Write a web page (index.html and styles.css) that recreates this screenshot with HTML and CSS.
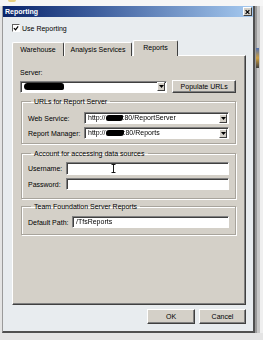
FILE: index.html
```html
<!DOCTYPE html>
<html>
<head>
<meta charset="utf-8">
<link rel="stylesheet" href="styles.css">
</head>
<body>
<div class="screen">
  <div class="backdrop-top"><span class="blob-yellow"></span></div>
  <div class="stage">
    <div class="window">
      <div class="titlebar">
        <span class="title">Reporting</span>
        <span class="close">
          <svg width="9" height="8" viewBox="0 0 9 8"><path d="M2 1.5 L7 6.5 M7 1.5 L2 6.5" stroke="#000" stroke-width="1.6"/></svg>
        </span>
      </div>
      <div class="body">
        <div class="check-row">
          <span class="checkbox"><svg width="7" height="7" viewBox="0 0 7 7"><path d="M1 3 L3 5 L6 1" fill="none" stroke="#000" stroke-width="1.4"/></svg></span>
          <span>Use Reporting</span>
        </div>
        <div class="tabs">
          <div class="tab tab-wh">Warehouse</div>
          <div class="tab tab-as">Analysis Services</div>
          <div class="tab active">Reports</div>
        </div>
        <div class="panel">
          <div class="lbl">Server:</div>
          <div class="server-row">
            <div class="combo server-combo">
              <span class="ctext"><span class="redact r-server"></span></span>
              <span class="dd"><svg width="5" height="3" viewBox="0 0 5 3"><path d="M0 0 H5 L2.5 3 Z" fill="#000"/></svg></span>
            </div>
            <div class="btn populate">Populate URLs</div>
          </div>
          <fieldset class="group g1">
            <legend>URLs for Report Server</legend>
            <div class="frow">
              <span class="flabel w56">Web Service:</span>
              <div class="combo grow">
                <span class="ctext"><span class="t">http://</span><span class="redact r-url"></span><span class="t">:80/ReportServer</span></span>
                <span class="dd"><svg width="5" height="3" viewBox="0 0 5 3"><path d="M0 0 H5 L2.5 3 Z" fill="#000"/></svg></span>
              </div>
            </div>
            <div class="frow">
              <span class="flabel w56">Report Manager:</span>
              <div class="combo grow">
                <span class="ctext"><span class="t">http://</span><span class="redact r-url2"></span><span class="t">:80/Reports</span></span>
                <span class="dd"><svg width="5" height="3" viewBox="0 0 5 3"><path d="M0 0 H5 L2.5 3 Z" fill="#000"/></svg></span>
              </div>
            </div>
          </fieldset>
          <fieldset class="group g2">
            <legend>Account for accessing data sources</legend>
            <div class="frow">
              <span class="flabel w38">Username:</span>
              <div class="textbox grow tall"><span class="ibeam"><svg width="5" height="9" viewBox="0 0 5 9"><path d="M0.5 0.5 H4.5 M2.5 0.5 V8.5 M0.5 8.5 H4.5" stroke="#000" stroke-width="0.9" fill="none"/></svg></span></div>
            </div>
            <div class="frow">
              <span class="flabel w38">Password:</span>
              <div class="textbox grow"></div>
            </div>
          </fieldset>
          <fieldset class="group g3">
            <legend>Team Foundation Server Reports</legend>
            <div class="frow">
              <span class="flabel w44">Default Path:</span>
              <div class="textbox grow"><span class="ctext"><span class="t">/TfsReports</span></span></div>
            </div>
          </fieldset>
        </div>
        <div class="buttons">
          <div class="btn ok">OK</div>
          <div class="btn cancel">Cancel</div>
        </div>
      </div>
    </div>
    <div class="side">
      <span class="side-bits"></span>
    </div>
  </div>
</div>
</body>
</html>
```

FILE: styles.css
```css
* { box-sizing: border-box; }
html, body { margin: 0; padding: 0; }
body {
  width: 263px;
  height: 340px;
  overflow: hidden;
  background: #e4e4e4;
  font-family: "Liberation Sans", Arial, sans-serif;
  font-size: 7px;
  color: #000;
}
.screen { width: 263px; height: 340px; display: flex; flex-direction: column; }
.backdrop-top {
  height: 6px;
  background: #f6f6f6;
  padding-left: 8px;
}
.blob-yellow {
  display: block;
  width: 8px;
  height: 2px;
  background: #e8d080;
  border-radius: 0 0 4px 4px;
}
.stage { display: flex; align-items: flex-start; }
.window {
  margin-left: 2px;
  width: 253px;
  height: 327px;
  background: #e8ecef;
  border-left: 1px solid #9a9a9a;
  border-right: 2px solid #505050;
  border-bottom: 2px solid #505050;
  display: flex;
  flex-direction: column;
}
.titlebar {
  height: 11px;
  background: linear-gradient(to right, #0a246a 0%, #3a5a9a 35%, #a6caf0 100%);
  display: flex;
  align-items: center;
  justify-content: space-between;
  padding: 0 1px 0 2px;
}
.title { color: #fff; font-weight: bold; font-size: 7px; line-height: 11px; }
.close {
  width: 9px;
  height: 9px;
  background: #d4d0c8;
  border: 1px solid;
  border-color: #fff #404040 #404040 #fff;
  display: flex;
  align-items: center;
  justify-content: center;
}
.close svg { width: 7px; height: 6px; }
.body {
  flex: 1;
  padding: 6px 7px 0 9px;
  display: flex;
  flex-direction: column;
}
.check-row {
  height: 10px;
  display: flex;
  align-items: center;
  gap: 2px;
}
.checkbox {
  width: 8px;
  height: 8px;
  background: #fff;
  border: 1px solid;
  border-color: #606060 #fff #fff #606060;
  display: flex;
  align-items: center;
  justify-content: center;
}
.tabs {
  margin-top: 7px;
  height: 16px;
  display: flex;
  align-items: flex-end;
  margin-bottom: -1px;
  position: relative;
  z-index: 1;
}
.tab {
  height: 14px;
  background: #d4d0c8;
  border: 1px solid;
  border-bottom: none;
  border-color: #fff #404040 #fff #fff;
  border-radius: 2px 2px 0 0;
  display: flex;
  align-items: center;
  justify-content: center;
  line-height: 12px;
}
.tab-wh { width: 52px; }
.tab-as { width: 68px; }
.tab.active {
  width: 45px;
  height: 16px;
  margin-left: 1px;
  padding-bottom: 1px;
}
.panel {
  height: 250px;
  background: #d4d0c8;
  border: 1px solid;
  border-color: #fff #404040 #404040 #fff;
  box-shadow: inset -1px -1px 0 #808080;
  padding: 12px 9px 0 7px;
  display: flex;
  flex-direction: column;
}
.lbl { line-height: 9px; height: 9px; }
.server-row {
  margin-top: 3px;
  height: 13px;
  display: flex;
  align-items: center;
  gap: 5px;
}
.combo, .textbox {
  height: 12px;
  background: #fff;
  border: 1px solid;
  border-color: #808080 #fff #fff #808080;
  box-shadow: inset 1px 1px 0 #404040;
  display: flex;
  align-items: center;
  color: #000;
}
.server-combo { width: 148px; }
.grow { flex: 1; }
.textbox.tall { height: 13px; }
.ctext {
  flex: 1;
  padding-left: 3px;
  display: flex;
  align-items: center;
  white-space: nowrap;
  line-height: 10px;
  color: #000;
  filter: grayscale(1);
}
.t { color: #000; }
.dd {
  width: 8px;
  height: 9px;
  margin-right: 1px;
  background: #d4d0c8;
  border: 1px solid;
  border-color: #fff #404040 #404040 #fff;
  display: flex;
  align-items: center;
  justify-content: center;
}
.redact {
  display: inline-block;
  background: #000;
  height: 6px;
  border-radius: 3px 1px 3px 2px;
}
.r-server { width: 40px; height: 7px; border-radius: 4px 3px 2px 4px; }
.r-url { width: 17px; }
.r-url2 { width: 18px; }
.btn {
  background: #d4d0c8;
  border: 1px solid;
  border-color: #fff #404040 #404040 #fff;
  box-shadow: inset -1px -1px 0 #808080;
  display: flex;
  align-items: center;
  justify-content: center;
}
.populate { width: 64px; height: 13px; }
.group {
  margin: 0 0 0 1px;
  width: 215px;
  border: 1px solid #a8a49c;
  box-shadow: 1px 1px 0 #fff, inset 1px 1px 0 #fff;
  padding: 0 6px;
  min-width: 0;
}
.group legend {
  padding: 0 3px;
  margin-left: 3px;
  line-height: 9px;
  height: 9px;
}
.g1 { margin-top: 4px; padding-top: 6px; padding-bottom: 4px; }
.g2 { margin-top: 5px; padding-top: 4px; padding-bottom: 8px; }
.g3 { margin-top: 3px; padding-top: 5px; padding-bottom: 6px; }
.frow { display: flex; align-items: center; }
.g1 .frow + .frow { margin-top: 3px; }
.g2 .frow + .frow { margin-top: 3px; }
.flabel { white-space: nowrap; }
.w56 { width: 56px; flex: none; }
.w38 { width: 38px; flex: none; }
.w44 { width: 44px; flex: none; }
.ibeam { margin-left: 44px; display: flex; }
.buttons {
  margin-top: 4px;
  display: flex;
  justify-content: flex-end;
  gap: 4px;
}
.ok { width: 48px; height: 15px; }
.cancel { width: 47px; height: 15px; }
.side {
  flex: 1;
  height: 327px;
  background: linear-gradient(to right, #9a9a9a 0, #9a9a9a 2px, #c8c8c8 2px, #c8c8c8 5px, #efefef 5px);
  padding-top: 42px;
}
.side-bits {
  display: block;
  width: 3px;
  height: 20px;
  margin-left: 1px;
  background: linear-gradient(#5070b0, #d0a040 50%, #404040);
}
```
